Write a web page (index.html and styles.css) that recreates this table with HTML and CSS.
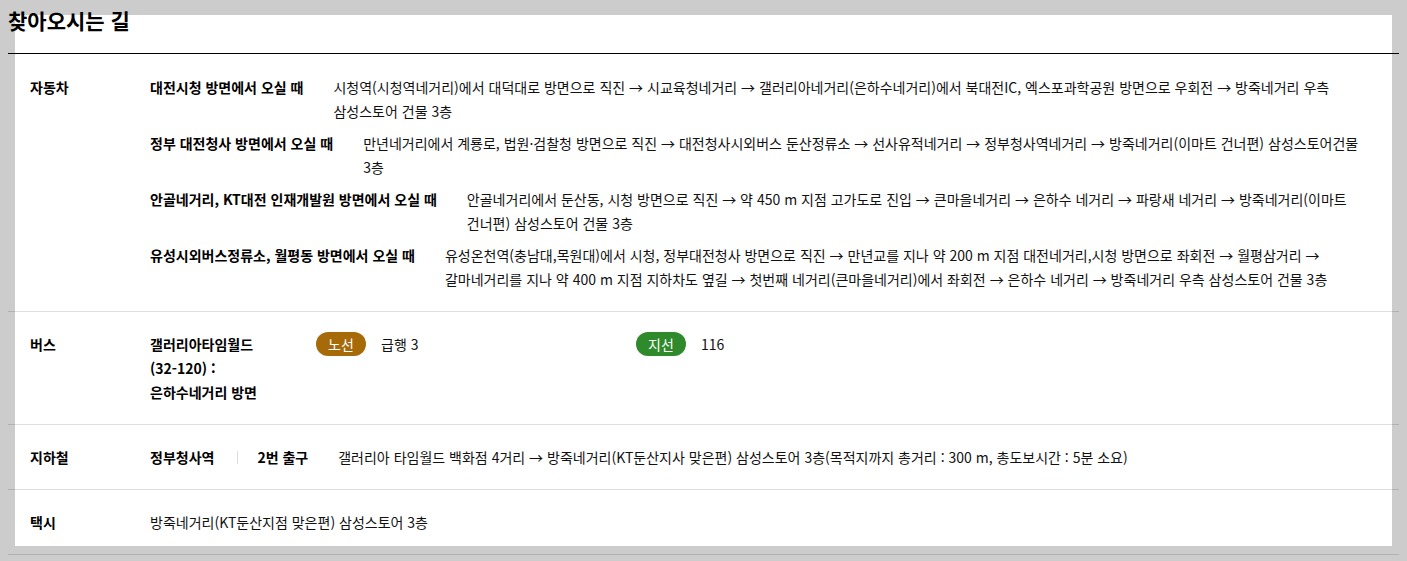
FILE: index.html
```html
<!DOCTYPE html>
<html lang="ko">
<head>
<meta charset="utf-8">
<title>찾아오시는 길</title>
<link rel="stylesheet" href="styles.css">
</head>
<body>
<div class="page">
  <h1 class="title">찾아오시는 길</h1>

  <div class="row row-car">
    <div class="label">자동차</div>
    <div class="content">
      <div class="route">
        <div class="route-title">대전시청 방면에서 오실 때</div>
        <div class="route-desc">시청역(시청역네거리)에서 대덕대로 방면으로 직진 → 시교육청네거리 → 갤러리아네거리(은하수네거리)에서 북대전IC, 엑스포과학공원 방면으로 우회전 → 방죽네거리 우측 삼성스토어 건물 3층</div>
      </div>
      <div class="route">
        <div class="route-title">정부 대전청사 방면에서 오실 때</div>
        <div class="route-desc">만년네거리에서 계룡로, 법원·검찰청 방면으로 직진 → 대전청사시외버스 둔산정류소 → 선사유적네거리 → 정부청사역네거리 → 방죽네거리(이마트 건너편) 삼성스토어건물 3층</div>
      </div>
      <div class="route">
        <div class="route-title">안골네거리, KT대전 인재개발원 방면에서 오실 때</div>
        <div class="route-desc">안골네거리에서 둔산동, 시청 방면으로 직진 → 약 450 m 지점 고가도로 진입 → 큰마을네거리 → 은하수 네거리 → 파랑새 네거리 → 방죽네거리(이마트 건너편) 삼성스토어 건물 3층</div>
      </div>
      <div class="route">
        <div class="route-title">유성시외버스정류소, 월평동 방면에서 오실 때</div>
        <div class="route-desc">유성온천역(충남대,목원대)에서 시청, 정부대전청사 방면으로 직진 → 만년교를 지나 약 200 m 지점 대전네거리,시청 방면으로 좌회전 → 월평삼거리 → 갈마네거리를 지나 약 400 m 지점 지하차도 옆길 → 첫번째 네거리(큰마을네거리)에서 좌회전 → 은하수 네거리 → 방죽네거리 우측 삼성스토어 건물 3층</div>
      </div>
    </div>
  </div>

  <div class="row">
    <div class="label">버스</div>
    <div class="content bus">
      <div class="bus-place">갤러리아타임월드 (32-120) : 은하수네거리 방면</div>
      <div class="bus-group">
        <span class="badge badge-trunk">노선</span>
        <span class="bus-no">급행 3</span>
      </div>
      <div class="bus-group">
        <span class="badge badge-branch">지선</span>
        <span class="bus-no">116</span>
      </div>
    </div>
  </div>

  <div class="row">
    <div class="label">지하철</div>
    <div class="content subway">
      <span class="station">정부청사역</span>
      <span class="exit">2번 출구</span>
      <span class="subway-desc">갤러리아 타임월드 백화점 4거리 → 방죽네거리(KT둔산지사 맞은편) 삼성스토어 3층(목적지까지 총거리 : 300 m, 총도보시간 : 5분 소요)</span>
    </div>
  </div>

  <div class="row">
    <div class="label">택시</div>
    <div class="content">방죽네거리(KT둔산지점 맞은편) 삼성스토어 3층</div>
  </div>
</div>
</body>
</html>
```
FILE: styles.css
```css
html, body {
  margin: 0;
  padding: 0;
}

body {
  background: #cccccc;
  padding: 8px;
  font-family: "Noto Sans CJK KR", "Noto Sans", sans-serif;
  font-size: 14px;
  line-height: 24px;
  color: #111;
  word-break: keep-all;
}

.page {
  background: linear-gradient(#fff, #fff) no-repeat;
  background-position: 7px 7px;
  background-size: calc(100% - 14px) 531px;
}

.title {
  margin: 0;
  font-size: 21px;
  line-height: 24px;
  font-weight: 700;
  color: #000;
  padding-bottom: 21px;
  border-bottom: 1px solid #000;
}

.row {
  display: flex;
  padding: 20px 22px;
  border-bottom: 1px solid rgba(0, 0, 0, 0.13);
}

.row-car {
  padding-top: 21px;
}

.label {
  width: 120px;
  flex: none;
  font-weight: 700;
  color: #000;
}

.content {
  flex: 1;
  min-width: 0;
}

.route {
  display: flex;
  gap: 30px;
  margin-bottom: 8px;
}

.route:last-child {
  margin-bottom: 0;
}

.route-title {
  flex: none;
  white-space: nowrap;
  font-weight: 700;
  color: #000;
}

.route-desc {
  flex: 1;
  min-width: 0;
}

.bus {
  display: flex;
  align-items: flex-start;
}

.bus-place {
  width: 120px;
  margin-right: 46px;
  flex: none;
  font-weight: 700;
  color: #000;
}

.bus-group {
  width: 320px;
  display: flex;
  align-items: center;
  gap: 15px;
}

.badge {
  display: inline-flex;
  align-items: center;
  justify-content: center;
  width: 50px;
  height: 24px;
  border-radius: 12px;
  color: #fff;
  font-size: 14px;
  line-height: 24px;
}

.badge-trunk {
  background: #a76a09;
}

.badge-branch {
  background: #2f8a2c;
}

.subway {
  display: flex;
  align-items: center;
}

.station,
.exit {
  font-weight: 700;
  color: #000;
  white-space: nowrap;
}

.station {
  display: inline-flex;
  align-items: center;
}

.station::after {
  content: "";
  display: inline-block;
  width: 1px;
  height: 13px;
  background: #dddddd;
  margin: 0 19px 0 23px;
}

.subway-desc {
  margin-left: 30px;
}
```
